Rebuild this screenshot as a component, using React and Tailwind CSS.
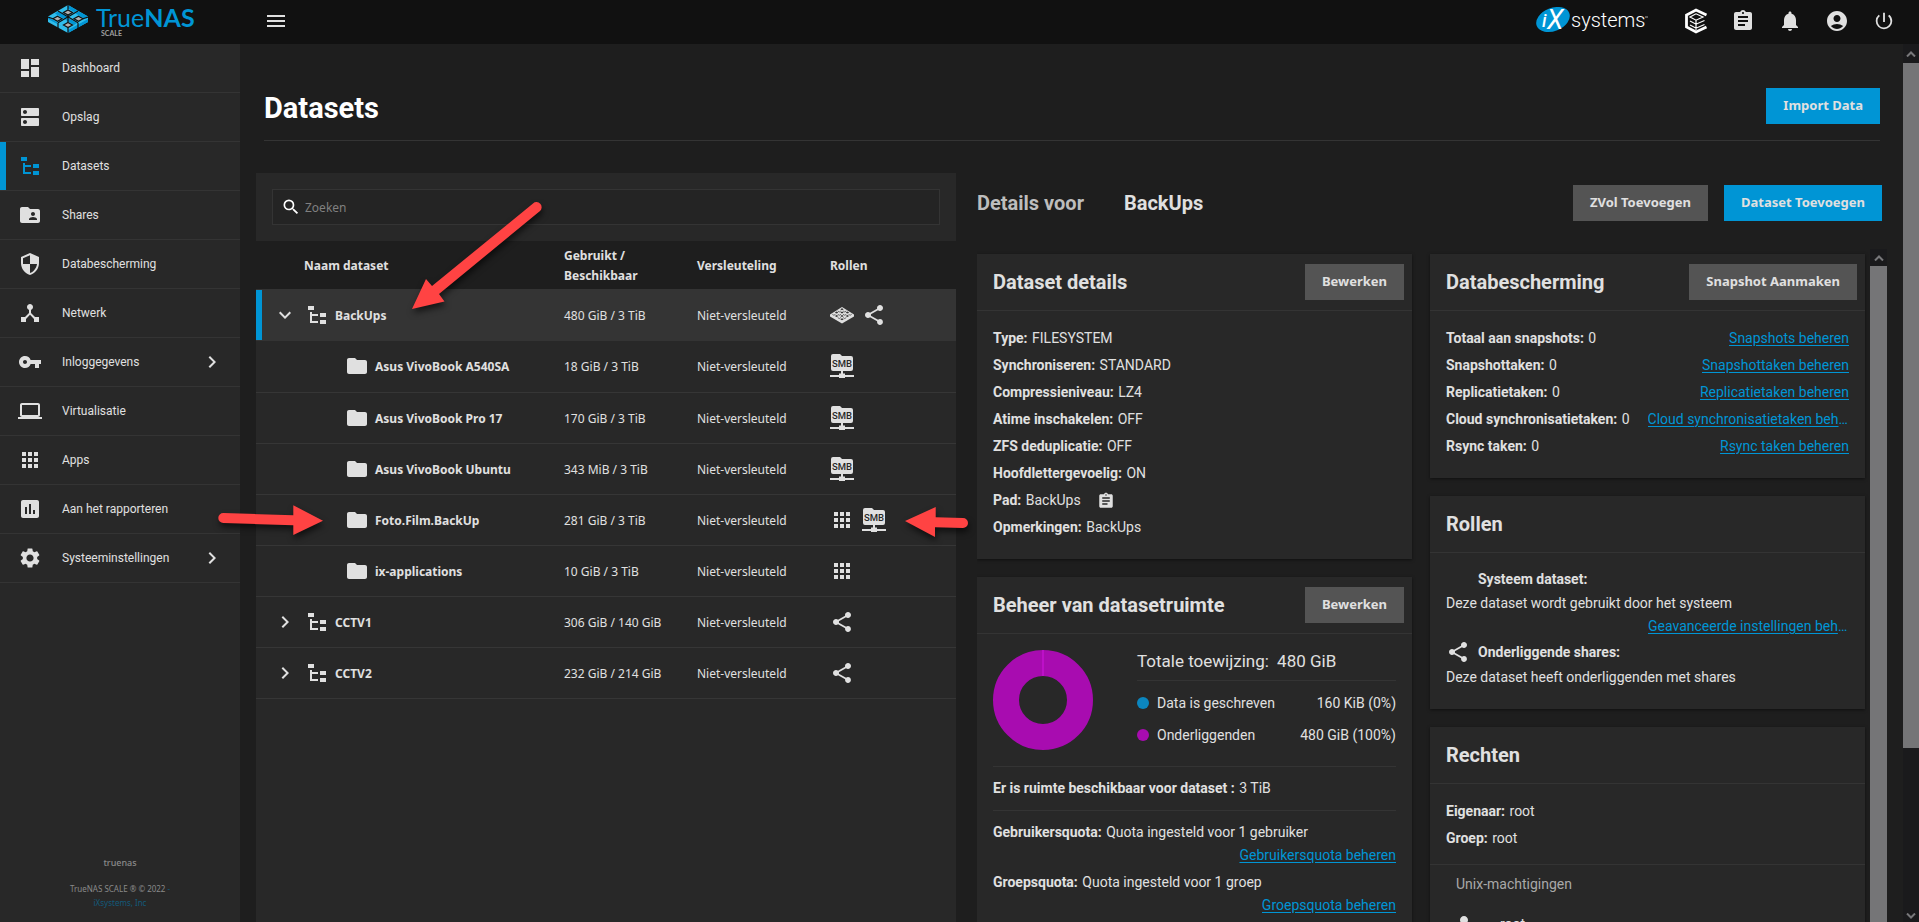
import React from 'react';
import {
  MdDashboard, MdDns, MdFolderShared, MdSecurity, MdDeviceHub, MdVpnKey, MdLaptop, MdApps,
  MdInsertChart, MdSettings, MdShare, MdFolder, MdAssignment, MdNotifications, MdAccountCircle,
  MdPowerSettingsNew, MdMenu, MdSearch, MdChevronRight, MdExpandMore, MdPerson,
} from 'react-icons/md';

const plex = "font-['Noto_Sans',sans-serif]";

function TreeIcon({ className }) {
  return (
    <svg viewBox="0 0 24 24" className={className} fill="currentColor" aria-hidden="true">
      <path d="M3,3H9V7H3V3M15,10H21V14H15V10M15,17H21V21H15V17M13,13H7V18H13V20H7L5,20V9H7V11H13V13Z" />
    </svg>
  );
}

function SmbIcon() {
  return (
    <svg viewBox="0 0 24 24" className="size-6" role="img" aria-label="SMB share">
      <g fill="#e0e0e0">
        <path d="M3 0h7l2 2h9a2 2 0 0 1 2 2v11a2 2 0 0 1-2 2H3a2 2 0 0 1-2-2V2a2 2 0 0 1 2-2z" />
        <path d="M11 17h2v2.500h2V21h9v2h-9v1H9v-1H0v-2h9v-1.500h2z" />
      </g>
      <text x="12" y="12.800" textAnchor="middle" fontSize="9.500" fontWeight="500" fontFamily="Roboto, sans-serif" fill="#282828">SMB</text>
    </svg>
  );
}

const cells = [0, 1, 2, 3];

function NasIcon() {
  return (
    <svg viewBox="0 0 24 24" className="size-6" role="img" aria-label="System dataset">
      <path d="M12 4 24 11.500v2L12 20.500 0 13.500v-2z" fill="#e0e0e0" />
      {cells.flatMap((r) =>
        cells.map((c) => {
          const x = 12 + (c - r) * 2.7;
          const y = 6.3 + (c + r) * 1.65;
          return (r + c) % 2 === 0 ? (
            <path key={r + '-' + c} d={`M${x} ${y - 1}l1.700 1l-1.700 1l-1.700 -1z`} fill="#343434" />
          ) : (
            <path key={r + '-' + c} d={`M${x - 1.6} ${y}l1.600 1l1.600 -1`} fill="none" stroke="#343434" strokeWidth="0.7" />
          );
        })
      )}
    </svg>
  );
}

function TrueNasLogo() {
  return (
    <a href="#home" aria-label="TrueNAS SCALE" className="flex gap-2 font-[Lato,sans-serif] text-[#0095d5]">
      <svg viewBox="0 0 40 28" className="h-7 w-10" aria-hidden="true">
        <path d="M0 13.500 20 24.500 40 13.500V17L20 28 0 17z" fill="#31beec" />
        <path d="M20 24.500 40 13.500V17L20 28z" fill="#0095d5" />
        <path d="M20 0 40 11.500V14L20 25 0 14V11.500z" fill="#31beec" />
        <g fill="#0095d5">
          <path d="M20 0l9.500 5.500-3 1.800L20 3.500z" />
          <path d="M30.500 6.200 40 11.500l-4 2-8.500-5z" />
          <path d="M10 6.500l9.500 5.500-3 2L7 8.500z" />
          <path d="M20 13l9 5-3 2-9-5.500z" />
          <path d="M0 12l9.500 5.500V19L0 14z" />
        </g>
        <g fill="#b0b0b0" stroke="#111" strokeWidth="1.200">
          <path d="M20 5l4.500 2.500-4.500 2.500-4.500-2.500z" />
          <path d="M9.500 11.300l4.500 2.500-4.500 2.500L5 13.800z" />
          <path d="M30.500 11.300l4.500 2.500-4.500 2.500-4.500-2.500z" />
          <path d="M20 17.500l4.500 2.500-4.500 2.500-4.500-2.500z" />
        </g>
        <g stroke="#111" strokeWidth="1.200" fill="none">
          <path d="M10 6 30 17.700M30 6 10 17.700M20 0v4.500M20 10v7M20 22.500V28M0 12l5 1.700M40 12l-5 1.700M10 17.700v5.500M30 17.700v5.500" />
        </g>
      </svg>
      <span className="flex flex-col">
        <span className="text-[25px] leading-[24px]">
          True<span className="font-bold">NAS</span>
        </span>
        <span className="pl-[5px] text-[7px] leading-[8px] font-bold text-[#a0a0a0]">SCALE</span>
      </span>
    </a>
  );
}

function IxLogo() {
  return (
    <svg viewBox="0 0 114 28" className="h-7 w-[114px]" role="img" aria-label="iXsystems">
      <ellipse cx="18" cy="12.500" rx="17.500" ry="11.500" transform="rotate(-22 18 12.500)" fill="#0095d5" />
      <text x="7" y="20" fontSize="18" fontWeight="500" fontStyle="italic" fontFamily="Roboto, sans-serif" fill="#fff">i</text>
      <text x="12" y="22" fontSize="27" fontWeight="400" fontStyle="italic" fontFamily="Roboto, sans-serif" fill="#fff">X</text>
      <text x="36" y="20" fontSize="20" fontWeight="300" fontFamily="Roboto, sans-serif" fill="#fff">systems</text>
      <path d="M110 10h3" stroke="#aaa" strokeWidth="1" />
    </svg>
  );
}

function CommandIcon() {
  return (
    <svg viewBox="0 0 24 26" className="h-[26px] w-6" fill="none" stroke="#fff" aria-hidden="true">
      <path d="M22.500 7 12 2 2.500 7v12l9.500 5 10.500-5" strokeWidth="2.800" />
      <path d="M6 9l6 3.200 7-3.200-7-3.200zM12 12.500V22M6 13l6 3.200 8.500-3.700M6 17l6 3.200 8.500-3.700" strokeWidth="1.200" />
    </svg>
  );
}

const nav = [
  { label: 'Dashboard', Icon: MdDashboard },
  { label: 'Opslag', Icon: MdDns },
  { label: 'Datasets', Icon: TreeIcon, active: true },
  { label: 'Shares', Icon: MdFolderShared },
  { label: 'Databescherming', Icon: MdSecurity },
  { label: 'Netwerk', Icon: MdDeviceHub },
  { label: 'Inloggegevens', Icon: MdVpnKey, more: true },
  { label: 'Virtualisatie', Icon: MdLaptop },
  { label: 'Apps', Icon: MdApps },
  { label: 'Aan het rapporteren', Icon: MdInsertChart },
  { label: 'Systeeminstellingen', Icon: MdSettings, more: true },
];

function Sidebar() {
  return (
    <aside className="flex w-60 shrink-0 flex-col bg-[#282828]">
      <nav>
        <ul>
          {nav.map(({ label, Icon, active, more }) => (
            <li key={label} className="border-b border-[#343434]">
              <a
                href="#nav"
                className={`flex h-12 items-center border-l-[6px] pr-4 pl-3 text-[12px] ${active ? 'border-[#0095d5]' : 'border-transparent'}`}
              >
                <Icon className={`size-6 shrink-0 ${active ? 'text-[#0095d5]' : ''}`} />
                <span className="flex-1 pl-5">{label}</span>
                {more && <MdChevronRight className="size-6" />}
              </a>
            </li>
          ))}
        </ul>
      </nav>
      <footer className={`mt-auto flex flex-col items-center pb-3 text-[#8a8a8a] ${plex}`}>
        <p className="mb-3 text-[9px] leading-[14px] font-medium">truenas</p>
        <p className="text-[8px] leading-[14px]">
          TrueNAS SCALE ® © 2022 <span className="text-[#135a7a]">-</span>
        </p>
        <a href="#ix" className="text-[8px] leading-[14px] text-[#135a7a]">iXsystems, Inc</a>
      </footer>
    </aside>
  );
}

function Topbar() {
  const btn = 'flex size-6 items-center justify-center';
  return (
    <header className="flex h-11 shrink-0 items-start justify-between bg-[#111] pr-[23px] pl-12">
      <div className="flex items-start pt-[5px]">
        <div className="w-[216px]"><TrueNasLogo /></div>
        <button type="button" aria-label="Menu" className={btn + ' mt-1'}><MdMenu className="size-6" /></button>
      </div>
      <div className="flex items-center gap-[23px] pt-[7px]">
        <a href="#ix" className="mr-3"><IxLogo /></a>
        <button type="button" aria-label="TrueCommand" className={btn}><CommandIcon /></button>
        <button type="button" aria-label="Jobs" className={btn}><MdAssignment className="size-6" /></button>
        <button type="button" aria-label="Alerts" className={btn}><MdNotifications className="size-6" /></button>
        <button type="button" aria-label="Account" className={btn}><MdAccountCircle className="size-6" /></button>
        <button type="button" aria-label="Power" className={btn}><MdPowerSettingsNew className="size-[22px]" /></button>
      </div>
    </header>
  );
}

function Button({ children, primary }) {
  return (
    <button
      type="button"
      className={`h-9 px-[17px] text-[13px] font-bold whitespace-nowrap ${plex} ${primary ? 'bg-[#0095d5]' : 'bg-[#545454]'}`}
    >
      {children}
    </button>
  );
}

function Arrow({ down }) {
  return (
    <svg viewBox="0 0 10 6" className="h-1.5 w-2.5" fill="none" stroke="#77777a" strokeWidth="2" aria-hidden="true">
      <path d={down ? 'M1 0.500l4 4 4-4' : 'M1 5.500l4-4 4 4'} />
    </svg>
  );
}

const rows = [
  { name: 'BackUps', used: '480 GiB / 3 TiB', roles: ['nas', 'share'], root: true, open: true },
  { name: 'Asus VivoBook A540SA', used: '18 GiB / 3 TiB', roles: ['smb'] },
  { name: 'Asus VivoBook Pro 17', used: '170 GiB / 3 TiB', roles: ['smb'] },
  { name: 'Asus VivoBook Ubuntu', used: '343 MiB / 3 TiB', roles: ['smb'] },
  { name: 'Foto.Film.BackUp', used: '281 GiB / 3 TiB', roles: ['apps', 'smb'] },
  { name: 'ix-applications', used: '10 GiB / 3 TiB', roles: ['apps'] },
  { name: 'CCTV1', used: '306 GiB / 140 GiB', roles: ['share'], root: true },
  { name: 'CCTV2', used: '232 GiB / 214 GiB', roles: ['share'], root: true },
];

function Role({ kind }) {
  if (kind === 'nas') return <NasIcon />;
  if (kind === 'smb') return <SmbIcon />;
  if (kind === 'apps') return <MdApps className="size-6" />;
  return <MdShare className="size-6" />;
}

function DatasetPanel() {
  return (
    <section className={`flex flex-col bg-[#282828] ${plex}`}>
      <div className="p-4">
        <label className="flex h-9 items-center border border-[#343434] bg-[#242424] pl-2">
          <MdSearch className="size-5 text-white" />
          <input
            type="search"
            aria-label="Zoeken"
            placeholder="Zoeken"
            className="ml-1 min-w-0 flex-1 bg-transparent pt-0.5 text-[12px] outline-none placeholder:text-[#808080]"
          />
        </label>
      </div>
      <table className="w-full table-fixed text-left text-[12px]">
        <thead className="bg-[#1e1e1e]">
          <tr className="h-12">
            <th className="pt-0.5 pl-12 font-bold">Naam dataset</th>
            <th className="w-[133px] pt-0.5 leading-5 font-bold">Gebruikt /<br />Beschikbaar</th>
            <th className="w-[133px] pt-0.5 font-bold">Versleuteling</th>
            <th className="w-[126px] pt-0.5 font-bold">Rollen</th>
          </tr>
        </thead>
        <tbody>
          {rows.map((r) => (
            <tr key={r.name} className={r.open ? 'h-[52px] bg-[#343434]' : 'h-[51px] border-b border-[#363636]'}>
              <td className="p-0">
                {r.root ? (
                  <div className={`flex h-[50px] items-center border-l-[6px] pl-[11px] ${r.open ? 'border-[#0095d5]' : 'border-transparent'}`}>
                    <button type="button" aria-label={'Toggle ' + r.name} className="flex size-6 items-center justify-center">
                      {r.open ? <MdExpandMore className="size-6" /> : <MdChevronRight className="size-6" />}
                    </button>
                    <TreeIcon className="ml-2 size-6" />
                    <span className="pt-0.5 pl-[6px] font-bold">{r.name}</span>
                  </div>
                ) : (
                  <div className="flex h-[50px] items-center pl-[89px]">
                    <MdFolder className="size-6" />
                    <span className="pt-0.5 pl-[6px] font-bold">{r.name}</span>
                  </div>
                )}
              </td>
              <td className="px-0 pt-0.5 pb-0">{r.used}</td>
              <td className="px-0 pt-0.5 pb-0">Niet-versleuteld</td>
              <td className="p-0">
                <div className="flex gap-2">{r.roles.map((k) => <Role key={k} kind={k} />)}</div>
              </td>
            </tr>
          ))}
        </tbody>
      </table>
    </section>
  );
}

function Card({ title, action, children }) {
  return (
    <section className="bg-[#282828] shadow-[0_1px_3px_rgba(0,0,0,0.5)]">
      <header className="flex h-[57px] items-center justify-between border-b border-[#343434] pr-2 pl-4">
        <h3 className="text-[20px] font-bold">{title}</h3>
        {action && <Button>{action}</Button>}
      </header>
      {children}
    </section>
  );
}

function Pair({ k, children }) {
  return (
    <p className="leading-[27px] whitespace-nowrap">
      <b>{k}</b> <span className="pl-px">{children}</span>
    </p>
  );
}

function Link({ children }) {
  return <a href="#manage" className="truncate text-[#0095d5] underline underline-offset-2">{children}</a>;
}

const details = [
  ['Type:', 'FILESYSTEM'],
  ['Synchroniseren:', 'STANDARD'],
  ['Compressieniveau:', 'LZ4'],
  ['Atime inschakelen:', 'OFF'],
  ['ZFS deduplicatie:', 'OFF'],
  ['Hoofdlettergevoelig:', 'ON'],
];

const protection = [
  ['Totaal aan snapshots:', 'Snapshots beheren'],
  ['Snapshottaken:', 'Snapshottaken beheren'],
  ['Replicatietaken:', 'Replicatietaken beheren'],
  ['Cloud synchronisatietaken:', 'Cloud synchronisatietaken beheren'],
  ['Rsync taken:', 'Rsync taken beheren'],
];

function SpaceCard() {
  return (
    <Card title="Beheer van datasetruimte" action="Bewerken">
      <div className="p-4">
        <div className="flex gap-11 border-b border-[#343434] pb-[15px]">
          <svg viewBox="0 0 100 100" className="size-[100px] shrink-0" role="img" aria-label="Onderliggenden 100%">
            <circle cx="50" cy="50" r="37" fill="none" stroke="#a80cb0" strokeWidth="26" />
            <path d="M50 0v26" stroke="#bd10c8" strokeWidth="2" />
          </svg>
          <div className="min-w-0 flex-1">
            <h4 className="border-b border-[#343434] pb-2 text-[17px] leading-[22px]">Totale toewijzing: <span className="pl-1">480 GiB</span></h4>
            <ul className="pt-[6px] leading-8">
              <li className="flex items-center">
                <span className="mr-2 size-3 rounded-full bg-[#0b86bf]" />Data is geschreven
                <span className="ml-auto">160 KiB (0%)</span>
              </li>
              <li className="flex items-center">
                <span className="mr-2 size-3 rounded-full bg-[#a80cb0]" />Onderliggenden
                <span className="ml-auto">480 GiB (100%)</span>
              </li>
            </ul>
          </div>
        </div>
        <div className="border-b border-[#343434] py-2"><Pair k="Er is ruimte beschikbaar voor dataset :">3 TiB</Pair></div>
        <div className="flex flex-col pt-2">
          <Pair k="Gebruikersquota:">Quota ingesteld voor 1 gebruiker</Pair>
          <div className="flex justify-end pb-1 leading-[19px]"><Link>Gebruikersquota beheren</Link></div>
          <Pair k="Groepsquota:">Quota ingesteld voor 1 groep</Pair>
          <div className="flex justify-end pb-1 leading-[19px]"><Link>Groepsquota beheren</Link></div>
        </div>
      </div>
    </Card>
  );
}

function Details() {
  return (
    <section className="flex min-h-0 min-w-0 flex-col">
      <div className="flex items-center justify-between pt-3 pr-[5px]">
        <h2 className="flex gap-10 text-[20px] font-bold">
          <span className="text-[#bdbdbd]">Details voor</span>
          <span>BackUps</span>
        </h2>
        <div className="flex gap-4">
          <Button>ZVol Toevoegen</Button>
          <Button primary>Dataset Toevoegen</Button>
        </div>
      </div>
      <div className="mt-7 flex min-h-0 flex-1 gap-[5px] overflow-hidden">
        <div className="grid flex-1 grid-cols-[minmax(0,1fr)_minmax(0,1fr)] gap-[18px] pt-[5px] text-[14px]">
          <div className="flex flex-col gap-[18px]">
            <Card title="Dataset details" action="Bewerken">
              <div className="px-4 pt-[14px] pb-[18px]">
                {details.map(([k, v]) => <Pair key={k} k={k}>{v}</Pair>)}
                <div className="flex items-center">
                  <Pair k="Pad:">BackUps</Pair>
                  <button type="button" aria-label="Copy path" className="ml-4"><MdAssignment className="size-[18px]" /></button>
                </div>
                <Pair k="Opmerkingen:">BackUps</Pair>
              </div>
            </Card>
            <SpaceCard />
          </div>
          <div className="flex flex-col gap-[18px]">
            <Card title="Databescherming" action="Snapshot Aanmaken">
              <div className="px-4 pt-[14px] pb-[18px]">
                {protection.map(([k, l]) => (
                  <div key={k} className="flex items-center justify-between gap-[18px]">
                    <Pair k={k}>0</Pair>
                    <Link>{l}</Link>
                  </div>
                ))}
              </div>
            </Card>
            <Card title="Rollen">
              <div className="px-4 pt-[14px] pb-[22px] leading-6">
                <p className="pl-8 font-bold">Systeem dataset:</p>
                <p>Deze dataset wordt gebruikt door het systeem</p>
                <div className="flex justify-end pl-[202px] leading-[22px]"><Link>Geavanceerde instellingen beheren</Link></div>
                <p className="flex h-[30px] items-center font-bold">
                  <MdShare className="size-6" /><span className="pl-2">Onderliggende shares:</span>
                </p>
                <p className="leading-5">Deze dataset heeft onderliggenden met shares</p>
              </div>
            </Card>
            <Card title="Rechten">
              <div className="border-b border-[#343434] px-4 pt-[14px] pb-3">
                <Pair k="Eigenaar:">root</Pair>
                <Pair k="Groep:">root</Pair>
              </div>
              <div className="px-[26px] pt-[7px]">
                <h4 className="leading-6 text-[#a8a8a8]">Unix-machtigingen</h4>
                <p className="flex items-center gap-6 pt-4">
                  <MdPerson className="-ml-1 size-6" />
                  <span>root</span>
                </p>
              </div>
            </Card>
          </div>
        </div>
        <div className="flex w-[17px] shrink-0 flex-col bg-[#1a1a1c]" aria-hidden="true">
          <div className="flex h-[17px] shrink-0 items-center justify-center"><Arrow /></div>
          <div className="flex-1 bg-[#757577]" />
        </div>
      </div>
    </section>
  );
}

const shadow = 'pointer-events-none absolute overflow-visible drop-shadow-[1px_4px_3px_rgba(0,0,0,0.6)]';

function Annotations() {
  return (
    <>
      <svg className={shadow + ' top-[202px] left-[412px] h-[107px] w-[130px]'} viewBox="412 202 130 107" aria-hidden="true">
        <path d="M412 309 426 279l6 7 101-82.500a5 5 0 0 1 7 7.500L439 294l5.500 7.500z" fill="#ff4343" />
      </svg>
      <svg className={shadow + ' top-[505px] left-[218px] h-[30px] w-[105px]'} viewBox="218 505 105 30" aria-hidden="true">
        <path d="M323 520.700 293.300 535v-9.700L223.300 523a5 5 0 0 1 0-10l70 2.300v-10z" fill="#ff4343" />
      </svg>
      <svg className={shadow + ' top-[507px] left-[905px] h-[30px] w-[63px]'} viewBox="905 507 63 30" aria-hidden="true">
        <path d="M905 521l30.700-14v10.300l27.300.7a5 5 0 0 1 0 10l-28-.7v9.700z" fill="#ff4343" />
      </svg>
    </>
  );
}

export default function App() {
  return (
    <div className="relative flex h-screen flex-col overflow-hidden bg-[#1e1e1e] font-[Roboto,sans-serif] text-[#e0e0e0]">
      <Topbar />
      <div className="flex min-h-0 flex-1">
        <Sidebar />
        <main className="flex min-w-0 flex-1 flex-col pr-4 pl-4">
          <div className="mr-[7px] ml-2 flex h-[97px] items-center justify-between border-b border-[#343434] pt-11 pb-4">
            <h1 className="pt-1 text-[29px] leading-8 font-bold text-white">Datasets</h1>
            <Button primary>Import Data</Button>
          </div>
          <div className="mt-8 grid min-h-0 flex-1 grid-cols-[minmax(0,70fr)_minmax(0,91fr)] grid-rows-[minmax(0,1fr)] gap-[21px]">
            <DatasetPanel />
            <Details />
          </div>
        </main>
        <div className="flex w-4 shrink-0 flex-col bg-[#1a1a1c]" aria-hidden="true">
          <div className="flex h-[19px] items-center justify-center"><Arrow /></div>
          <div className="h-[78%] bg-[#757577]" />
          <div className="mt-auto flex h-3 items-center justify-center"><Arrow down /></div>
        </div>
      </div>
      <Annotations />
    </div>
  );
}
